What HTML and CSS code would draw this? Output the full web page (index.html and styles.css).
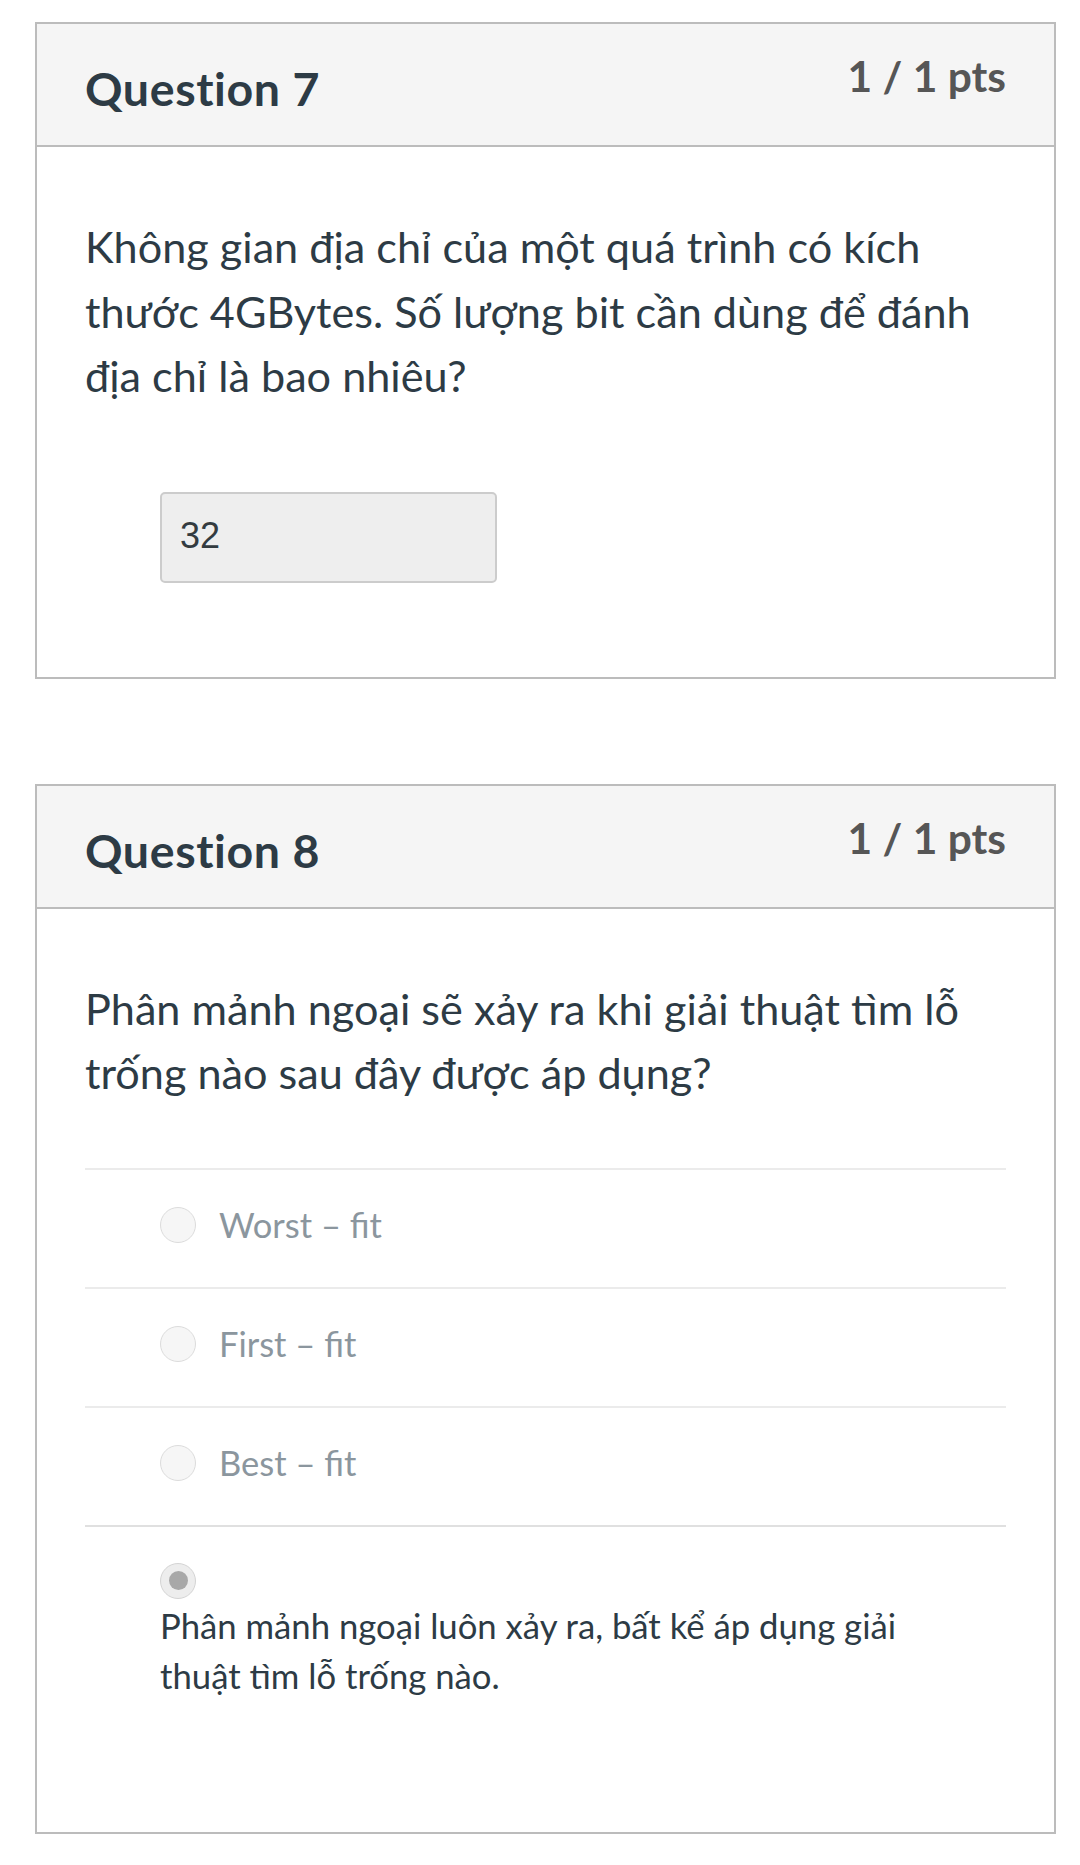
FILE: index.html
```html
<!DOCTYPE html>
<html lang="vi">
<head>
<meta charset="utf-8">
<title>Quiz</title>
<link rel="stylesheet" href="styles.css">
</head>
<body>
<main class="page">
  <section class="card">
    <header class="card-head">
      <h2 class="q-title">Question 7</h2>
      <span class="q-pts">1 / 1 pts</span>
    </header>
    <div class="card-body card-body--short">
      <p class="q-text">Không gian địa chỉ của một quá trình có kích thước 4GBytes. Số lượng bit cần dùng để đánh địa chỉ là bao nhiêu?</p>
      <div class="answer-box">32</div>
    </div>
  </section>

  <section class="card card--second">
    <header class="card-head">
      <h2 class="q-title">Question 8</h2>
      <span class="q-pts">1 / 1 pts</span>
    </header>
    <div class="card-body card-body--long">
      <p class="q-text">Phân mảnh ngoại sẽ xảy ra khi giải thuật tìm lỗ trống nào sau đây được áp dụng?</p>
      <ul class="options">
        <li class="option">
          <span class="radio"></span>
          <span class="opt-text">Worst – fit</span>
        </li>
        <li class="option">
          <span class="radio"></span>
          <span class="opt-text">First – fit</span>
        </li>
        <li class="option">
          <span class="radio"></span>
          <span class="opt-text">Best – fit</span>
        </li>
        <li class="option option--stacked">
          <span class="radio radio--checked"></span>
          <span class="opt-text opt-text--selected">Phân mảnh ngoại luôn xảy ra, bất kể áp dụng giải thuật tìm lỗ trống nào.</span>
        </li>
      </ul>
    </div>
  </section>
</main>
</body>
</html>
```

FILE: styles.css
```css
html, body {
  margin: 0;
  padding: 0;
  background: #ffffff;
}

body {
  font-family: Lato, "Noto Sans", "Liberation Sans", sans-serif;
  color: #2d3b45;
}

.page {
  padding: 22px 24px 0 35px;
}

.card {
  border: 2px solid #bcbcbc;
  background: #ffffff;
}

.card--second {
  margin-top: 105px;
}

.card-head {
  display: flex;
  justify-content: space-between;
  align-items: flex-start;
  background: #f5f5f5;
  border-bottom: 2px solid #bcbcbc;
  padding: 37px 48px 29px 48px;
}

.q-title {
  margin: 0;
  font-size: 46.5px;
  line-height: 55px;
  font-weight: 700;
  letter-spacing: 0.6px;
  color: #2d3b45;
}

.q-pts {
  margin-top: -11px;
  font-size: 42.5px;
  line-height: 51px;
  font-weight: 700;
  color: #565656;
}

.card-body {
  padding: 67px 48px 0 48px;
}

.card-body--short {
  padding-bottom: 94px;
}

.card-body--long {
  padding-bottom: 131px;
}

.q-text {
  margin: 0;
  font-size: 43.2px;
  line-height: 64.5px;
  color: #2d3b45;
}

.answer-box {
  margin: 84px 0 0 75px;
  width: 297px;
  height: 87px;
  box-sizing: content-box;
  padding: 0 18px;
  border: 2px solid #cccccc;
  border-radius: 5px;
  background: #eeeeee;
  font-family: "Liberation Sans", Arial, sans-serif;
  font-size: 36px;
  line-height: 84px;
  color: #333b40;
}

.options {
  list-style: none;
  margin: 63px 0 0 0;
  padding: 0;
}

.option {
  display: flex;
  align-items: center;
  gap: 23px;
  border-top: 2px solid #ebebeb;
  padding: 30px 0 37px 75px;
}

.option--stacked {
  flex-direction: column;
  align-items: flex-start;
  gap: 2px;
  border-top-color: #e0e0e0;
  padding-top: 36px;
  padding-bottom: 0;
}

.radio {
  flex: none;
  width: 34px;
  height: 34px;
  border: 1.5px solid #dcdcdc;
  border-radius: 50%;
  background: #f6f6f6;
  display: flex;
  align-items: center;
  justify-content: center;
}

.radio--checked {
  background: #ededed;
  border-color: #d4d4d4;
}

.radio--checked::after {
  content: "";
  width: 19px;
  height: 19px;
  border-radius: 50%;
  background: #a8a8a8;
}

.opt-text {
  font-size: 34.5px;
  line-height: 50px;
  color: #8b969e;
}

.opt-text--selected {
  color: #2d3b45;
  font-size: 34.7px;
  max-width: 800px;
}
```
